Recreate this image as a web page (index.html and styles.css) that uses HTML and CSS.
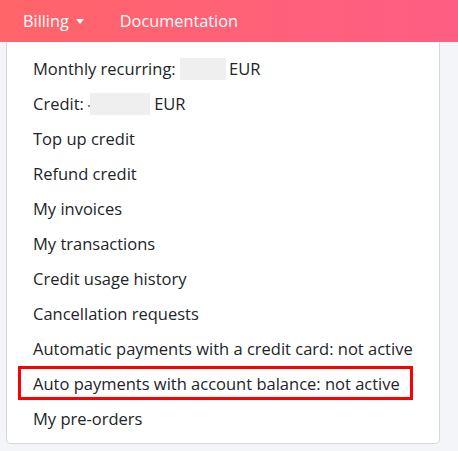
FILE: index.html
```html
<!doctype html>
<html>
<head>
<meta charset="utf-8">
<title>Billing</title>
<link rel="stylesheet" href="styles.css">
</head>
<body>
<div class="nav">
	<a class="nav-link">Billing <span class="caret"></span></a>
	<a class="nav-link">Documentation</a>
</div>
<div class="menu">
	<a class="item">Monthly recurring: <span class="hide w46"></span>EUR</a>
	<a class="item">Credit: <span class="dash"></span><span class="hide w60"></span>EUR</a>
	<a class="item">Top up credit</a>
	<a class="item">Refund credit</a>
	<a class="item">My invoices</a>
	<a class="item">My transactions</a>
	<a class="item">Credit usage history</a>
	<a class="item">Cancellation requests</a>
	<a class="item">Automatic payments with a credit card: not active</a>
	<a class="item mark">Auto payments with account balance: not active</a>
	<a class="item">My pre-orders</a>
</div>
</body>
</html>
```
FILE: styles.css
```css
body {
	margin: 0;
	background: #f4f5f8;
	font-family: "Open Sans", "Noto Sans", sans-serif;
	color: #212529;
}
.nav {
	height: 42px;
	background: linear-gradient(90deg, #ff6569, #ff5e84);
	display: flex;
	align-items: center;
	padding-left: 23px;
	gap: 36px;
}
.nav-link {
	color: #fff;
	font-size: 16.3px;
	display: flex;
	align-items: center;
	gap: 7px;
}
.caret {
	width: 0;
	height: 0;
	border-left: 4.5px solid transparent;
	border-right: 4.5px solid transparent;
	border-top: 5px solid #fff;
}
.menu {
	width: 432px;
	margin-left: 6px;
	background: #fff;
	border: 1px solid #d6d8dc;
	border-top: 0;
	border-radius: 0 0 5px 5px;
	padding: 9px 0 7px;
}
.item {
	display: flex;
	align-items: center;
	height: 35px;
	padding-left: 26px;
	font-size: 16.5px;
	white-space: pre;
}
.hide {
	display: inline-block;
	height: 22px;
	background: #efefef;
}
.w46 { width: 46px; margin-right: 3px; }
.w60 { width: 60px; margin-right: 4px; }
.dash {
	display: inline-block;
	width: 2px;
	height: 2px;
	background: #888;
	margin-top: 4px;
}
.mark {
	height: 34px;
	box-sizing: border-box;
	margin: 0 26px 1px 11px;
	padding-left: 12px;
	border: 3px solid #f00;
}
```
